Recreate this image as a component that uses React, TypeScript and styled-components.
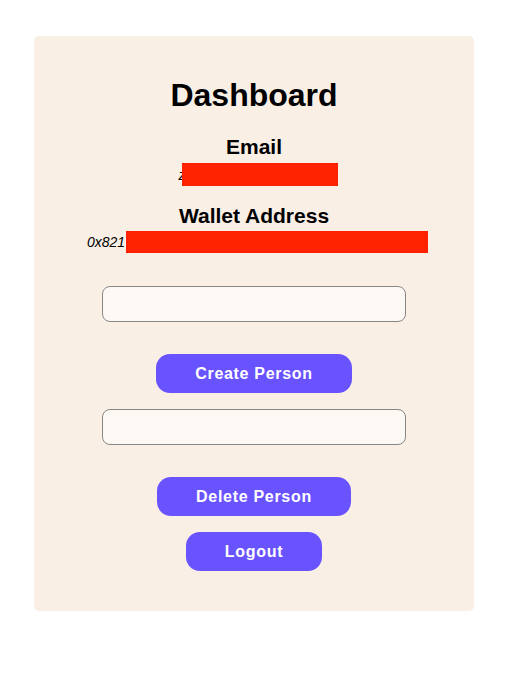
import React from "react";
import styled, { createGlobalStyle } from "styled-components";

const GlobalStyle = createGlobalStyle`
  html, body {
    margin: 0;
    padding: 0;
    background: #ffffff;
    font-family: "Liberation Sans", Arial, Helvetica, sans-serif;
  }
`;

const Page = styled.div`
  padding: 36px 0 0 34px;
`;

const Card = styled.div`
  width: 440px;
  box-sizing: border-box;
  background: #faefe5;
  border-radius: 5px;
  padding: 41px 0 40px;
  display: flex;
  flex-direction: column;
  align-items: center;
`;

const Title = styled.h1`
  margin: 0 0 21px;
  font-size: 32px;
  font-weight: 700;
  line-height: 37px;
  color: #000;
`;

const Label = styled.h3<{ $top?: number }>`
  margin: ${(p) => p.$top ?? 0}px 0 0;
  font-size: 21px;
  font-weight: 700;
  line-height: 24px;
  color: #000;
`;

const ValueRow = styled.div<{ $shift: number; $top: number }>`
  margin-top: ${(p) => p.$top}px;
  padding-left: ${(p) => p.$shift}px;
  display: flex;
  align-items: center;
  font-size: 14px;
  font-style: italic;
  line-height: 16px;
  color: #000;
  white-space: nowrap;
`;

const Redaction = styled.span<{ $w: number; $h: number; $overlap: number }>`
  display: inline-block;
  width: ${(p) => p.$w}px;
  height: ${(p) => p.$h}px;
  margin-left: ${(p) => -p.$overlap}px;
  background: #ff2200;
  position: relative;
`;

const Field = styled.input<{ $top: number }>`
  margin-top: ${(p) => p.$top}px;
  width: 304px;
  height: 36px;
  box-sizing: border-box;
  border: 1px solid #878787;
  border-radius: 8px;
  background: #fcf8f4;
  outline: none;
  font-family: inherit;
  font-size: 14px;
  padding: 0 10px;
`;

const Button = styled.button<{ $top: number }>`
  margin-top: ${(p) => p.$top}px;
  height: 39px;
  padding: 0 39px;
  border: none;
  border-radius: 14px;
  background: #6953ff;
  color: #ffffff;
  font-family: "Liberation Sans", Arial, Helvetica, sans-serif;
  font-size: 16px;
  font-weight: 700;
  letter-spacing: 0.7px;
  cursor: pointer;
`;

export default function App() {
  return (
    <>
      <GlobalStyle />
      <Page>
        <Card>
          <Title>Dashboard</Title>
          <Label>Email</Label>
          <ValueRow $shift={8} $top={4}>
            <span>z</span>
            <Redaction $w={156} $h={23} $overlap={4} />
          </ValueRow>
          <Label $top={18}>Wallet Address</Label>
          <ValueRow $shift={7} $top={3}>
            <span>0x821</span>
            <Redaction $w={302} $h={22} $overlap={-1} />
          </ValueRow>
          <Field $top={33} />
          <Button $top={32}>Create Person</Button>
          <Field $top={16} />
          <Button $top={32}>Delete Person</Button>
          <Button $top={16}>Logout</Button>
        </Card>
      </Page>
    </>
  );
}
